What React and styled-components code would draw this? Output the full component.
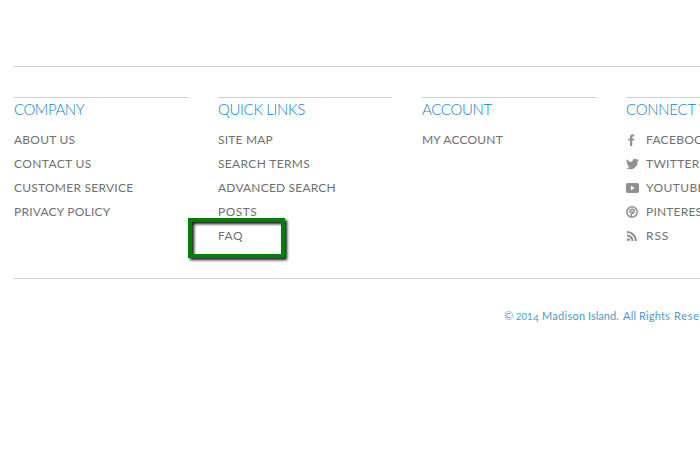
import React from 'react';
import styled, { createGlobalStyle } from 'styled-components';

const GlobalStyle = createGlobalStyle`
  body {
    margin: 0;
    background: #fff;
    overflow: hidden;
    font-family: Lato, 'Open Sans', sans-serif;
  }
`;

const Page = styled.div`
  width: 700px;
  height: 458px;
  overflow: hidden;
`;

const Footer = styled.footer`
  width: 786px;
  margin: 66px 0 0 14px;
  border-top: 1px solid #ccc;
`;

const Columns = styled.div`
  display: grid;
  grid-template-columns: repeat(4, 174px);
  column-gap: 30px;
  height: 181px;
  padding-top: 30px;
  box-sizing: content-box;
  border-bottom: 1px solid #ccc;
`;

const Column = styled.section`
  border-top: 1px solid #ccc;
`;

const Heading = styled.h2`
  margin: 1px 0 11px;
  height: 20px;
  font-size: 15px;
  font-weight: 300;
  line-height: 20px;
  letter-spacing: ${(p) => p.$track ?? -0.36}px;
  color: #1282c4;
  white-space: nowrap;
`;

const LinkList = styled.ul`
  margin: 0;
  padding: 0;
  list-style: none;
`;

const LinkRow = styled.li`
  position: relative;
  display: flex;
  align-items: center;
  height: 20px;
  margin-bottom: 4px;
`;

const FooterLink = styled.a`
  font-size: 12px;
  line-height: 20px;
  letter-spacing: ${(p) => p.$track ?? 0.24}px;
  color: #707070;
  white-space: nowrap;
`;

const IconSlot = styled.span`
  display: flex;
  align-items: center;
  width: 20px;
  flex: none;
  color: #919191;
`;

const Icon = styled.svg`
  display: block;
  fill: currentColor;
`;

const Highlight = styled.div`
  position: absolute;
  left: -30px;
  top: -8px;
  width: 97px;
  height: 40px;
  box-sizing: border-box;
  border: 4px solid #008000;
  filter: drop-shadow(2px 2px 1.5px rgba(0, 0, 0, 0.95));
`;

const Copyright = styled.p`
  display: flex;
  margin: 27px 0 0 490px;
  font-size: 11px;
  line-height: 20px;
  color: #4a9bd0;
  white-space: pre;
`;

const Word = styled.span`
  width: ${(p) => p.$width}px;
  letter-spacing: ${(p) => p.$track ?? 0}px;
  flex: none;
`;

const SmallDigit = styled.span`
  font-size: 9px;
  letter-spacing: 0.4px;
`;

const LowDigit = styled.span`
  position: relative;
  top: 2px;
  font-size: 10px;
`;

function SocialIcon({ name }) {
  if (name === 'facebook') {
    return (
      <Icon width="12" height="12" viewBox="0 0 12 12">
        <path d="M4 12V6.5H2.2V4.4H4V3.1C4 1.2 5 .6 6.5.6H8.3V2.6H7.1C6.4 2.6 6.2 2.9 6.2 3.5V4.4H8.3L8 6.5H6.2V12Z" />
      </Icon>
    );
  }
  if (name === 'twitter') {
    return (
      <Icon width="13" height="12" viewBox="0 0 24 22">
        <path d="M23.95 3.57a10 10 0 0 1-2.82.77 4.96 4.96 0 0 0 2.16-2.72c-.95.55-2 .95-3.13 1.18a4.92 4.92 0 0 0-8.38 4.48C7.69 7.09 4.07 5.13 1.64 2.16a4.93 4.93 0 0 0 1.52 6.57 4.9 4.9 0 0 1-2.23-.61v.06a4.92 4.92 0 0 0 3.95 4.83 5 5 0 0 1-2.21.08 4.94 4.94 0 0 0 4.6 3.42A9.87 9.87 0 0 1 0 18.55a13.99 13.99 0 0 0 7.56 2.21c9.05 0 14-7.5 14-13.98l-.02-.64a9.94 9.94 0 0 0 2.41-2.57Z" />
      </Icon>
    );
  }
  if (name === 'youtube') {
    return (
      <Icon width="13" height="10" viewBox="0 0 13 10">
        <path
          fillRule="evenodd"
          d="M1.7 0H11.3Q13 0 13 1.7V8.3Q13 10 11.3 10H1.7Q0 10 0 8.3V1.7Q0 0 1.7 0ZM4.9 2.8V7.2L8.6 5Z"
        />
      </Icon>
    );
  }
  if (name === 'pinterest') {
    return (
      <Icon width="12" height="12" viewBox="0 0 24 24">
        <circle cx="12" cy="12" r="10.4" fill="none" stroke="currentColor" strokeWidth="3.2" />
        <path
          d="M8.4 13.6C6.2 9.8 8.4 6.4 12.2 6.4C15.8 6.4 17.2 8.8 16.4 11.8C15.6 15 12.4 15.8 11.4 13.6M12.5 9.8L9.6 22"
          fill="none"
          stroke="currentColor"
          strokeWidth="3"
        />
      </Icon>
    );
  }
  return (
    <Icon width="12" height="12" viewBox="0 0 12 12">
      <circle cx="2.5" cy="9.6" r="1.5" />
      <path
        d="M1 5.5A5.5 5.5 0 0 1 6.5 11M1 2A9 9 0 0 1 10 11"
        fill="none"
        stroke="currentColor"
        strokeWidth="2.1"
      />
    </Icon>
  );
}

const columns = [
  {
    title: 'COMPANY',
    track: -0.48,
    links: [
      { label: 'ABOUT US' },
      { label: 'CONTACT US', track: 0.38 },
      { label: 'CUSTOMER SERVICE' },
      { label: 'PRIVACY POLICY', track: 0.22 },
    ],
  },
  {
    title: 'QUICK LINKS',
    links: [
      { label: 'SITE MAP', track: 0.2 },
      { label: 'SEARCH TERMS', track: 0.34 },
      { label: 'ADVANCED SEARCH', track: 0.19 },
      { label: 'POSTS', track: 0.5 },
      { label: 'FAQ', track: 0.5, highlighted: true },
    ],
  },
  { title: 'ACCOUNT', links: [{ label: 'MY ACCOUNT', track: 0.18 }] },
  {
    title: 'CONNECT WITH US',
    track: -0.28,
    links: [
      { label: 'FACEBOOK', icon: 'facebook', track: 0.3 },
      { label: 'TWITTER', icon: 'twitter', track: 0.3 },
      { label: 'YOUTUBE', icon: 'youtube', track: 0.4 },
      { label: 'PINTEREST', icon: 'pinterest', track: 0.2 },
      { label: 'RSS', icon: 'rss', track: 0.9 },
    ],
  },
];

export default function App() {
  return (
    <Page>
      <GlobalStyle />
      <Footer>
        <Columns>
          {columns.map((column) => (
            <Column key={column.title}>
              <Heading $track={column.track}>{column.title}</Heading>
              <LinkList>
                {column.links.map((link) => (
                  <LinkRow key={link.label}>
                    {link.icon && (
                      <IconSlot>
                        <SocialIcon name={link.icon} />
                      </IconSlot>
                    )}
                    <FooterLink $track={link.track}>{link.label}</FooterLink>
                    {link.highlighted && <Highlight />}
                  </LinkRow>
                ))}
              </LinkList>
            </Column>
          ))}
        </Columns>
        <Copyright>
          <Word $width={12}>©</Word>
          <Word $width={26}>
            <SmallDigit>201</SmallDigit>
            <LowDigit>4</LowDigit>
          </Word>
          <Word $width={46} $track={0.3}>Madison</Word>
          <Word $width={35}>Island.</Word>
          <Word $width={16} $track={0.2}>All</Word>
          <Word $width={35} $track={0.2}>Rights</Word>
          <Word $width={60} $track={0.75}>Reserved.</Word>
        </Copyright>
      </Footer>
    </Page>
  );
}
